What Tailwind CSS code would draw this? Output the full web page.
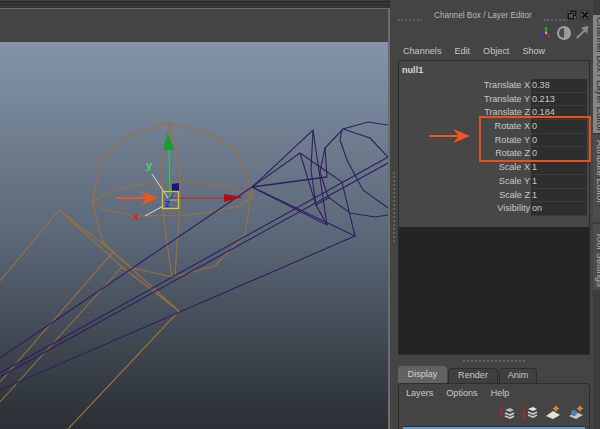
<!DOCTYPE html>
<html lang="en">
<head>
    <meta charset="UTF-8">
    <title>Channel Box</title>
    <script src="https://cdn.jsdelivr.net/npm/@tailwindcss/browser@4"></script>
</head>
<body class="w-[600px] h-[429px] overflow-hidden bg-[#444444] font-['Liberation_Sans',sans-serif] text-[9.1px] text-[#c8c8c8]">
<div class="flex w-[600px] h-[429px]">

    <!-- viewport -->
    <div class="relative w-[390px] h-[429px] flex flex-col bg-[#3a3a3a]">
        <div class="h-2 bg-[repeating-linear-gradient(#3c3c3c_0px,#3c3c3c_1px,#2e2e2e_1px,#2e2e2e_3px)]"></div>
        <div class="flex-1 flex flex-col border-t border-r-2 border-[#6e6e6e]">
            <div class="h-[33px] bg-[#444444]"></div>
            <div class="relative flex-1 bg-gradient-to-b from-[#8493a8] via-[#5b6878] to-[#2b2f35]"></div>
        </div>

        <!-- wireframe scene -->
        <svg class="absolute left-0 top-0" width="388" height="429" viewBox="0 0 388 429" fill="none">
            <g stroke="#a0703c" stroke-width="1.1">
                <polyline points="170,123 208,133 237,150 253,195 250,200 245,235 215,266 173,277 132,268 113,252 103,242 92,202 102,158 130,135 170,123"/>
                <polyline points="92,202 105,194 133,185 183,181 225,186 253,195 240,206 190,215 137,216 105,210 92,202"/>
                <polyline points="170,123 161,165 163,210 167,243 172,277"/>
                <polyline points="170,123 180,165 180,210 177,243 175,277"/>
                <polyline points="0,281 59,210 113,252 179,311 68,429"/>
                <polyline points="59,210 122,267 179,311"/>
                <line x1="113" y1="252" x2="0" y2="382"/>
                <line x1="122" y1="267" x2="0" y2="402"/>
            </g>
            <g stroke="#2f1f60" stroke-width="1.1">
                <line x1="0" y1="358" x2="252" y2="187"/>
                <line x1="0" y1="373" x2="388" y2="157"/>
                <line x1="0" y1="377" x2="388" y2="163"/>
                <line x1="0" y1="390" x2="355" y2="236"/>
                <polyline points="252,187 313,130 327,225 252,187"/>
                <polyline points="252,187 300,153 342,182 355,236 252,187"/>
                <line x1="252" y1="187" x2="327" y2="177" stroke-width="1.7"/>
                <polyline points="313,130 311,170 316,205 327,225"/>
                <polyline points="300,153 316,205 330,197"/>
                <polyline points="327,177 325,148 343,129 368,122 388,125"/>
                <polyline points="343,129 370,138 388,157"/>
                <polyline points="342,130 340,140 347,160 363,190 388,208"/>
                <polyline points="325,148 320,172 328,197 350,213 375,217 388,215"/>
            </g>
            <!-- manipulator -->
            <line x1="169" y1="150" x2="170" y2="198" stroke="#22d84a"/>
            <polygon points="168,133 163,150 174,150" fill="#12a02c"/>
            <line x1="170" y1="198" x2="225" y2="198" stroke="#d81a1a"/>
            <polygon points="243,197 224,194 224,202" fill="#b00d0d"/>
            <line x1="152" y1="174" x2="168" y2="198" stroke="#d8dde2"/>
            <line x1="145" y1="216" x2="163" y2="206" stroke="#d8dde2"/>
            <polygon points="172,184 179,183 179,191 172,191" fill="#16168a"/>
            <line x1="170" y1="200" x2="175" y2="190" stroke="#2040d0"/>
            <rect x="162.5" y="191.5" width="16" height="17" stroke="#d8c828" stroke-width="1.3"/>
            <line x1="170" y1="200" x2="177" y2="200" stroke="#50e0b0"/>
        </svg>
        <span class="absolute left-[146px] top-[157px] text-[11px] font-bold text-[#35e04a]">y</span>
        <span class="absolute left-[133px] top-[208px] text-[11px] font-bold text-[#e02020]">x</span>
        <span class="absolute left-[165px] top-[196px] text-[10px] font-bold text-[#1c30d0]">z</span>

        <!-- annotation arrow -->
        <svg class="absolute left-[117px] top-[191px]" width="42" height="14" viewBox="0 0 42 14">
            <path d="M0 6h29l-5-6 17 7-17 7 5-6H0z" fill="#f0561e"/>
        </svg>
    </div>

    <!-- channel box panel -->
    <div class="relative w-[203px] h-[429px] flex flex-col pl-[8px] pr-[3px] bg-[#444444]">
        <div class="h-[25px] flex items-end">
            <span class="w-6 mb-[4px] border-t-2 border-dotted border-[#626262]"></span>
            <span class="mx-[12px] mb-[3px] text-[8.2px] text-[#b8b8b8] whitespace-nowrap">Channel Box / Layer Editor</span>
            <span class="w-6 mb-[4px] border-t-2 border-dotted border-[#626262]"></span>
        </div>
        <div class="h-[15px] flex items-center justify-end gap-[5px] pr-[1px]">
            <svg width="13" height="13" viewBox="0 0 13 13" fill="none">
                <path d="M7 7V1" stroke="#2e9e3e" stroke-width="2.4"/>
                <path d="M7 7L1 9" stroke="#2a3ea8" stroke-width="2.6"/>
                <path d="M7 7l4 4" stroke="#a82a2a" stroke-width="2.6"/>
                <circle cx="7" cy="7" r="1" fill="#cccccc"/>
            </svg>
            <span class="w-[14px] h-[14px] rounded-full border-2 border-[#a0a0a0] bg-[linear-gradient(90deg,#4a4a4a_55%,#9a9a9a_55%)]"></span>
            <svg width="13" height="13" viewBox="0 0 13 13">
                <path d="M0 11.500L7.500 4 5 1.500 12.500 0 11 8 9 5.500 1.500 13z" fill="#8a8a8a"/>
            </svg>
        </div>
        <div class="h-[20px] flex items-center gap-[13px] pt-[4px] pl-[5px] text-[#c4c4c4]">
            <span>Channels</span><span>Edit</span><span>Object</span><span>Show</span>
        </div>
        <div class="h-[295px] flex flex-col border border-[#2c2c2c]">
            <div class="h-[166px] flex flex-col bg-[#474747] pl-[3px] pr-[2px]">
                <div class="h-[18px] pt-[3px] font-bold text-[#d8d8d8]">null1</div>
                <div class="flex flex-col">
                    <div class="h-[13.7px] flex items-center justify-end"><span class="pr-[1px]">Translate X</span><span class="w-[56px] h-full pl-[1px] bg-[#2e2e2e] border-b border-[#3c3c3c]">0.38</span></div>
                    <div class="h-[13.7px] flex items-center justify-end"><span class="pr-[1px]">Translate Y</span><span class="w-[56px] h-full pl-[1px] bg-[#2e2e2e] border-b border-[#3c3c3c]">0.213</span></div>
                    <div class="h-[13.7px] flex items-center justify-end"><span class="pr-[1px]">Translate Z</span><span class="w-[56px] h-full pl-[1px] bg-[#2e2e2e] border-b border-[#3c3c3c]">0.184</span></div>
                    <div class="h-[13.7px] flex items-center justify-end"><span class="pr-[1px]">Rotate X</span><span class="w-[56px] h-full pl-[1px] bg-[#2e2e2e] border-b border-[#3c3c3c]">0</span></div>
                    <div class="h-[13.7px] flex items-center justify-end"><span class="pr-[1px]">Rotate Y</span><span class="w-[56px] h-full pl-[1px] bg-[#2e2e2e] border-b border-[#3c3c3c]">0</span></div>
                    <div class="h-[13.7px] flex items-center justify-end"><span class="pr-[1px]">Rotate Z</span><span class="w-[56px] h-full pl-[1px] bg-[#2e2e2e] border-b border-[#3c3c3c]">0</span></div>
                    <div class="h-[13.7px] flex items-center justify-end"><span class="pr-[1px]">Scale X</span><span class="w-[56px] h-full pl-[1px] bg-[#2e2e2e] border-b border-[#3c3c3c]">1</span></div>
                    <div class="h-[13.7px] flex items-center justify-end"><span class="pr-[1px]">Scale Y</span><span class="w-[56px] h-full pl-[1px] bg-[#2e2e2e] border-b border-[#3c3c3c]">1</span></div>
                    <div class="h-[13.7px] flex items-center justify-end"><span class="pr-[1px]">Scale Z</span><span class="w-[56px] h-full pl-[1px] bg-[#2e2e2e] border-b border-[#3c3c3c]">1</span></div>
                    <div class="h-[13.7px] flex items-center justify-end"><span class="pr-[1px]">Visibility</span><span class="w-[56px] h-full pl-[1px] bg-[#2e2e2e] border-b border-[#3c3c3c]">on</span></div>
                </div>
            </div>
            <div class="flex-1 bg-[#242424]"></div>
        </div>
        <div class="h-[12px] flex items-center justify-center">
            <span class="w-[62px] border-t-2 border-dotted border-[#626262]"></span>
        </div>
        <div class="h-[16px] flex items-end">
            <span class="w-[49px] h-[17px] flex items-center justify-center rounded-t-sm bg-[#626262] text-[#d0d0d0]">Display</span>
            <span class="ml-px w-[50px] h-[15px] flex items-center justify-center rounded-t-sm bg-[#3f3f3f] border border-b-0 border-[#2e2e2e]">Render</span>
            <span class="ml-px w-[38px] h-[15px] flex items-center justify-center rounded-t-sm bg-[#3f3f3f] border border-b-0 border-[#2e2e2e]">Anim</span>
        </div>
        <div class="flex-1 flex flex-col border-t border-x border-[#2e2e2e] rounded-t-sm">
            <div class="h-[20px] flex items-center gap-[13px] pl-[7px]">
                <span>Layers</span><span>Options</span><span>Help</span>
            </div>
            <div class="h-[22px] flex items-start justify-end gap-[7px] pt-[1px] pr-[5px]">
                <svg width="16" height="15" viewBox="0 0 16 15" fill="none">
                    <path d="M2 14V3" stroke="#c02020" stroke-width="1.2"/>
                    <path d="M0 5l2-4 2 4z" fill="#c02020"/>
                    <path d="M6 5l5-2 4 2-4 2z" fill="#b8b8b8"/>
                    <path d="M6 8l5 2 4-2M6 11l5 2 4-2" stroke="#d0d0d0" stroke-width="1.6"/>
                </svg>
                <svg width="16" height="15" viewBox="0 0 16 15" fill="none">
                    <path d="M2 1v11" stroke="#c02020" stroke-width="1.2"/>
                    <path d="M0 10l2 4 2-4z" fill="#c02020"/>
                    <path d="M6 4l5-2 4 2-4 2z" fill="#e8e8e8"/>
                    <path d="M6 7l5 2 4-2M6 10l5 2 4-2" stroke="#c8c8c8" stroke-width="1.6"/>
                </svg>
                <svg width="16" height="15" viewBox="0 0 16 15">
                    <path d="M1 11l7-5 7 4-7 4z" fill="#e0e0e0"/>
                    <path d="M11 0l1 2.500 2.500 1-2.500 1-1 2.500-1-2.500-2.500-1 2.500-1z" fill="#f0a040"/>
                    <circle cx="11" cy="3.500" r="2" fill="#f07a1a"/>
                </svg>
                <svg width="16" height="15" viewBox="0 0 16 15">
                    <path d="M1 11l7-4 7 3-7 4z" fill="#c8c8c8"/>
                    <circle cx="6" cy="8" r="3" fill="#4a80b8"/>
                    <path d="M12 0l1 2.500 2.500 1-2.500 1-1 2.500-1-2.500-2.500-1 2.500-1z" fill="#f0a040"/>
                    <circle cx="12" cy="3.500" r="2" fill="#f07a1a"/>
                </svg>
            </div>
            <div class="mx-[4px] flex-1 bg-[#6a9ac8] border-t border-[#2e2e2e]"></div>
        </div>

        <!-- resize grip on the left edge -->
        <div class="absolute left-[3px] top-[172px] h-[70px] border-l-2 border-dotted border-[#626262]"></div>

        <!-- annotation -->
        <div class="absolute left-[89px] top-[116px] w-[112px] h-[46px] border-2 border-[#e8501c]"></div>
        <svg class="absolute left-[39px] top-[129px]" width="42" height="14" viewBox="0 0 42 14">
            <path d="M0 6h29l-5-6 17 7-17 7 5-6H0z" fill="#f0561e"/>
        </svg>
    </div>

    <!-- side tabs, wider than what is left of the window -->
    <div class="w-[7px] h-[429px] flex flex-col pt-[15px] text-[9.6px] text-[#2c2c2c] bg-[#3c3c3c]">
        <div class="w-[14px] h-[118px] shrink-0 bg-[#858585] [writing-mode:vertical-rl] whitespace-nowrap leading-[14px] pt-[2px]">Channel Box / Layer Editor</div>
        <div class="mt-[2px] w-[14px] h-[87px] shrink-0 bg-[#4c4c4c] text-[#b0b0b0] [writing-mode:vertical-rl] whitespace-nowrap leading-[14px] pt-[5px]">Attribute Editor</div>
        <div class="mt-[2px] w-[14px] h-[66px] shrink-0 bg-[#4c4c4c] text-[#b0b0b0] [writing-mode:vertical-rl] whitespace-nowrap leading-[14px] pt-[8px]">Tool Settings</div>
    </div>

    <!-- window buttons -->
    <div class="absolute left-[567px] top-[10px] flex gap-[3px]">
        <span class="w-[10px] h-[10px] flex items-center justify-center bg-[#555555] border border-[#333333]">
            <svg width="8" height="8" viewBox="0 0 8 8" fill="none" stroke="#111111"><path d="M2.500 2.500V.5h5v4H5.500M.5 2.500h5v5h-5z"/></svg>
        </span>
        <span class="w-[10px] h-[10px] flex items-center justify-center bg-[#555555] border border-[#333333]">
            <svg width="8" height="8" viewBox="0 0 8 8" fill="none" stroke="#111111" stroke-width="1.8"><path d="M1 1l6 6M7 1L1 7"/></svg>
        </span>
    </div>
</div>
</body>
</html>
